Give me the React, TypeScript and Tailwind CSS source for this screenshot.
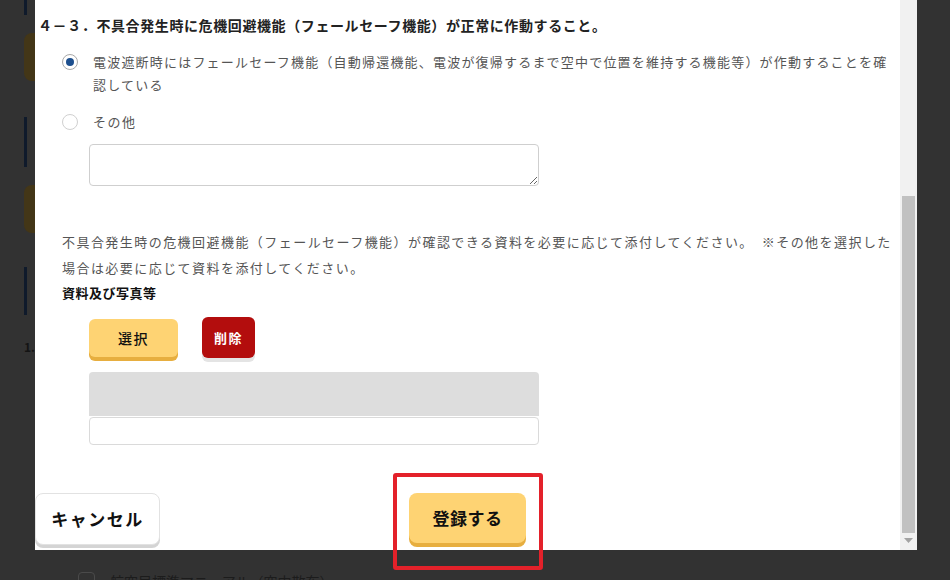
import React from 'react'

function Radio({ checked }: { checked?: boolean }) {
    return (
        <span
            className={
                'mt-[3.5px] flex h-4 w-4 shrink-0 items-center justify-center rounded-full border bg-white ' +
                (checked ? 'border-[#a9a9a9]' : 'border-[#d0d0d0]')
            }
        >
            {checked && <span className="h-[8px] w-[8px] rounded-full bg-[#1d4f8e]" />}
        </span>
    )
}

export default function App() {
    return (
        <div className="relative flex h-[580px] w-[950px] flex-col overflow-hidden bg-[#323232] font-['Noto_Sans_CJK_JP',sans-serif]">
            <div className="flex h-[550px] shrink-0">
                {/* dimmed page behind the modal */}
                <div className="flex w-[35px] shrink-0 flex-col overflow-hidden pl-[24px]">
                    <div className="h-[15px] w-[3px] bg-[#0f1a2b]" />
                    <div className="mt-[18px] h-[48px] w-[20px] rounded-l-lg bg-[#433617]" />
                    <div className="mt-[36px] h-[50px] w-[3px] bg-[#0f1a2b]" />
                    <div className="mt-[18px] h-[48px] w-[20px] rounded-l-lg bg-[#433617]" />
                    <div className="mt-[34px] h-[48px] w-[3px] bg-[#0f1a2b]" />
                    <div className="mt-[22px] whitespace-nowrap text-[12px] font-bold leading-[20px] text-[#141414]">1.</div>
                </div>

                {/* modal */}
                <div className="flex w-[882px] shrink-0 bg-white">
                    <div className="flex w-[865px] flex-col overflow-hidden">
                        <h2 className="mt-[14px] pl-[3px] text-[14px] font-bold leading-[22px] tracking-[0.6px] text-[#222]">
                            ４－３．不具合発生時に危機回避機能（フェールセーフ機能）が正常に作動すること。
                        </h2>

                        <div className="pl-[27px] text-[13px] tracking-[1.45px] text-[#555]">
                            <label className="mt-[14px] flex gap-[15px] leading-[23px]">
                                <Radio checked />
                                <span className="min-w-0 flex-1 tracking-[1.2px]">
                                    電波遮断時にはフェールセーフ機能（自動帰還機能、電波が復帰するまで空中で位置を維持する機能等）が作動することを確認している
                                </span>
                            </label>
                            <label className="mt-[14px] flex gap-[15px] leading-[23px]">
                                <Radio />
                                <span>その他</span>
                            </label>
                            <textarea className="ml-[27px] mt-[11px] block h-[42px] w-[450px] rounded border border-[#cfcfcf] bg-white" />

                            <p className="mt-[43px] leading-[26px]">
                                不具合発生時の危機回避機能（フェールセーフ機能）が確認できる資料を必要に応じて添付してください。　※その他を選択した場合は必要に応じて資料を添付してください。
                            </p>
                            <div className="mt-[1px] text-[13px] font-bold leading-[22px] tracking-[0.5px] text-[#111]">資料及び写真等</div>

                            <div className="ml-[27px] mt-[13px] flex items-start gap-[24px]">
                                <button className="mt-[2px] h-[38px] w-[89px] rounded-md bg-[#fed373] text-[14px] font-medium text-[#111] shadow-[0_4px_0_#e7ae3f]">
                                    選択
                                </button>
                                <button className="h-[41px] w-[53px] rounded-md bg-[#b30d0d] text-[13px] font-bold text-white shadow-[0_4px_0_#e4e4e4]">
                                    削除
                                </button>
                            </div>

                            <div className="ml-[27px] mt-[14px] h-[44px] w-[450px] rounded-t bg-[#dddddd]" />
                            <div className="ml-[27px] mt-[1px] h-[28px] w-[450px] rounded border border-[#dadada]" />
                        </div>

                        <div className="mt-[48px] grid grid-cols-[1fr_auto_1fr] items-start">
                            <button className="h-[52px] w-[125px] justify-self-start rounded-lg border border-[#e2e2e2] bg-white text-[17px] font-bold tracking-[1.5px] text-[#111] shadow-[0_3px_0_#d4d4d4]">
                                キャンセル
                            </button>
                            <button className="h-[50px] w-[117px] rounded-lg bg-[#fed373] text-[17px] font-bold tracking-[0.5px] text-[#111] shadow-[0_4px_0_#e7ae3f]">
                                登録する
                            </button>
                            <div />
                        </div>
                    </div>

                    {/* scrollbar */}
                    <div className="flex w-[17px] shrink-0 flex-col items-center bg-[#f1f1f1]">
                        <div className="mt-[196px] h-[337px] w-[13px] bg-[#c1c1c1]" />
                        <svg className="mt-[5px]" width="9" height="6" viewBox="0 0 9 6">
                            <path d="M0 0h9L4.5 5z" fill="#a3a3a3" />
                        </svg>
                    </div>
                </div>
            </div>

            {/* dimmed page below the modal */}
            <div className="flex items-start gap-[15px] pl-[78px] pt-[22px]">
                <div className="h-[17px] w-[17px] shrink-0 rounded-sm border border-[#4a4a4a]" />
                <span className="whitespace-nowrap text-[14px] leading-[18px] text-[#1c1c1c]">
                    航空局標準マニュアル（空中散布）
                </span>
            </div>

            {/* highlight annotation */}
            <div className="absolute left-[393px] top-[473px] h-[97px] w-[150px] rounded-[3px] border-4 border-[#e3212a]" />
        </div>
    )
}
